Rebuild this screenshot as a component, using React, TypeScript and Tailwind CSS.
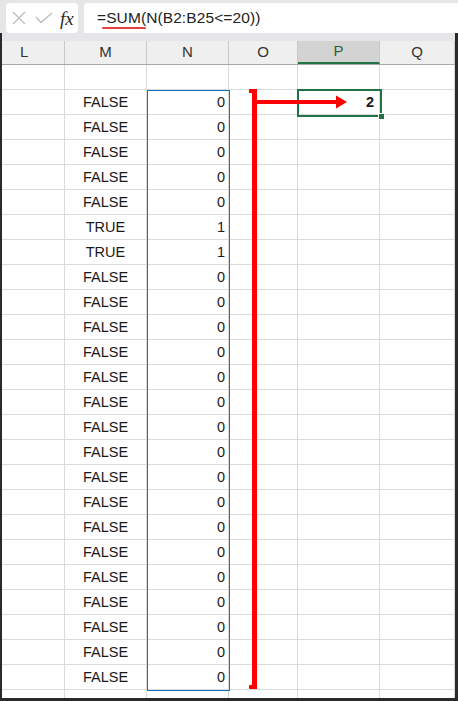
import React from 'react';

const COLS = [
  { name: 'L', w: 'w-[63px]' },
  { name: 'M', w: 'w-[82px]' },
  { name: 'N', w: 'w-[82px]' },
  { name: 'O', w: 'w-[69px]' },
  { name: 'P', w: 'w-[82px]' },
  { name: 'Q', w: 'w-[75px]' },
];

const VALUES = Array.from({ length: 24 }, (_, i) => i === 5 || i === 6);

const Row = ({ m, n, p, h = 'h-[25px]' }: { m?: string; n?: string; p?: string; h?: string }) => (
  <div className={`flex ${h}`}>
    {COLS.map((c) => (
      <div
        key={c.name}
        className={`${c.w} shrink-0 border-r border-b border-[#dadada] flex items-center pt-[2px] text-[14.5px] text-[#1a1a1a] ${
          c.name === 'M' ? 'justify-center' : 'justify-end pr-[3px]'
        } ${c.name === 'P' ? 'font-bold pr-[5px]' : ''}`}
      >
        {c.name === 'M' && m}
        {c.name === 'N' && n}
        {c.name === 'P' && p}
      </div>
    ))}
  </div>
);

export default function App() {
  return (
    <div
      className="relative w-[458px] h-[701px] overflow-hidden bg-white"
      style={{ fontFamily: '"Liberation Sans", Arial, sans-serif' }}
    >
      {/* Formula bar */}
      <div className="h-[33px] bg-[#e6e6e9] flex items-end pl-[6px] gap-[6px]">
        <div className="w-[72px] h-[30px] bg-white rounded-[4px] flex items-center pl-[6px]">
          <svg width="14" height="14" viewBox="0 0 14 14">
            <path d="M1 1 L13 13 M13 1 L1 13" stroke="#bdbdbd" strokeWidth="1.3" fill="none" />
          </svg>
          <svg width="18" height="12" viewBox="0 0 18 12" className="ml-[9px]">
            <path d="M1 5 L6 10.5 L17 1" stroke="#bdbdbd" strokeWidth="1.3" fill="none" />
          </svg>
          <span
            className="ml-[7px] italic text-[19px] text-[#2b2b2b] leading-none"
            style={{ fontFamily: '"Liberation Serif", "Times New Roman", serif' }}
          >
            fx
          </span>
        </div>
        <div className="flex-1 h-[30px] bg-white rounded-tl-[4px] flex items-center pl-[13px]">
          <span className="relative text-[15.5px] text-[#222] tracking-[0.1px]">
            =SUM(N(B2:B25&lt;=20))
            <span className="absolute left-[5px] top-[21px] w-[44px] h-[2px] rounded-full bg-[#e8403f]" />
          </span>
        </div>
      </div>

      {/* Sheet */}
      <div className="h-[668px] border-l-2 border-r-[3px] border-b-[3px] border-[#2a2a2a] overflow-hidden">
        <div className="h-[8px] bg-[#e6e6e9]" />
        <div className="flex h-[24px] bg-[#efefef] border-b border-[#a8a8a8]">
          {COLS.map((c) => (
            <div
              key={c.name}
              className={`${c.w} shrink-0 flex items-center text-[15px] border-r border-[#c8c8c8] ${
                c.name === 'L' ? 'justify-start pl-[18px]' : 'justify-center'
              } ${
                c.name === 'P'
                  ? 'bg-[#d3d3d3] text-[#2e5e40] border-b-2 border-b-[#217346]'
                  : 'text-[#333]'
              }`}
            >
              {c.name}
            </div>
          ))}
        </div>
        <Row />
        {VALUES.map((v, i) => (
          <Row key={i} m={v ? 'TRUE' : 'FALSE'} n={v ? '1' : '0'} p={i === 0 ? '2' : undefined} />
        ))}
        <Row />
      </div>

      {/* Selection of N2:N25 */}
      <div className="absolute left-[147px] top-[90px] w-[83px] h-[601px] border border-[#1c6fbf] pointer-events-none" />

      {/* Active cell P2 */}
      <div className="absolute left-[297px] top-[89px] w-[85px] h-[28px] border-2 border-[#217346] pointer-events-none" />
      <div className="absolute left-[378px] top-[113px] w-[7px] h-[7px] bg-[#217346] border border-white pointer-events-none" />

      {/* Red annotation */}
      <svg className="absolute left-0 top-0 pointer-events-none" width="458" height="701">
        <rect x="252" y="89" width="5" height="600" fill="#ff0000" />
        <rect x="249" y="89" width="8" height="4" fill="#ff0000" />
        <rect x="249" y="685" width="8" height="4" rx="1" fill="#ff0000" />
        <rect x="257" y="100" width="80" height="4" fill="#ff0000" />
        <polygon points="336,95.5 347,102 336,108.5" fill="#ff0000" />
      </svg>
    </div>
  );
}
